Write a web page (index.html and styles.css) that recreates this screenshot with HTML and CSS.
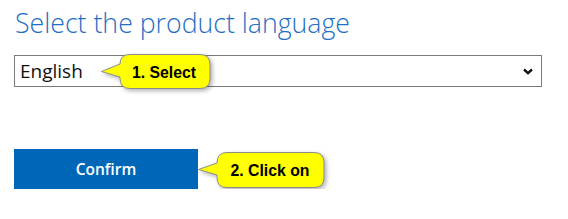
FILE: index.html
```html
<!DOCTYPE html>
<html lang="en">
<head>
<meta charset="utf-8">
<title>Select the product language</title>
<link rel="stylesheet" href="styles.css">
</head>
<body>
<main class="page">
  <h2 class="title">Select the product language</h2>
  <div class="field">
    <div class="select">
      <span class="select-value">English</span>
      <svg class="chevron" width="10" height="7" viewBox="0 0 10 7"><path d="M1 1.5 L5 5.2 L9 1.5" fill="none" stroke="#111" stroke-width="2.4"/></svg>
    </div>
    <div class="callout callout-1">
      <svg class="bubble" width="114" height="40" viewBox="0 0 114 40"><path d="M30 1.5 H100 Q110 1.5 110 11.5 V25.5 Q110 35.5 100 35.5 H30 Q20 35.5 20 25.5 V24 L1.5 18.5 L20 11 Q20 1.5 30 1.5 Z" fill="#ffff00" stroke="#8c8c8c" stroke-width="1"/></svg>
      <span class="callout-text">1. Select</span>
    </div>
  </div>
  <div class="actions">
    <button class="confirm" type="button">Confirm</button>
    <div class="callout callout-2">
      <svg class="bubble" width="130" height="40" viewBox="0 0 130 40"><path d="M29 1.5 H116 Q126 1.5 126 11.5 V26.5 Q126 36.5 116 36.5 H29 Q19 36.5 19 26.5 V24 L0.5 18.5 L19 12 Q19 1.5 29 1.5 Z" fill="#ffff00" stroke="#8c8c8c" stroke-width="1"/></svg>
      <span class="callout-text">2. Click on</span>
    </div>
  </div>
</main>
</body>
</html>
```
FILE: styles.css
```css
html, body {
  margin: 0;
  padding: 0;
  background: #ffffff;
}

.page {
  padding: 0 14px;
  font-family: "Open Sans", "Noto Sans", sans-serif;
}

.title {
  margin: 0;
  padding-top: 5px;
  padding-left: 1px;
  font-family: "Open Sans", sans-serif;
  font-weight: 300;
  font-size: 26.7px;
  line-height: 36px;
  color: #1f6fc5;
  letter-spacing: 0;
}

.field {
  position: relative;
  margin-top: 14px;
  width: 528px;
}

.select {
  box-sizing: border-box;
  height: 32px;
  border: 1px solid #7a7a7a;
  display: flex;
  align-items: center;
  justify-content: space-between;
  padding: 0 8px 0 5px;
}

.select-value {
  font-family: "Open Sans", sans-serif;
  font-size: 19px;
  color: #111;
  line-height: 30px;
}

.actions {
  position: relative;
  margin-top: 62px;
  width: 528px;
}

.confirm {
  display: block;
  width: 184px;
  height: 40px;
  border: 0;
  margin: 0;
  background: #0067b8;
  color: #fff;
  font-family: "Open Sans", sans-serif;
  font-weight: 600;
  font-size: 15.5px;
  padding: 0;
}

.callout {
  position: absolute;
  display: flex;
  align-items: center;
  justify-content: center;
}

.callout .bubble {
  position: absolute;
  left: 0;
  top: 0;
  filter: drop-shadow(2px 2px 2px rgba(0, 0, 0, 0.3));
}

.callout-text {
  position: relative;
  font-family: "Liberation Sans", Arial, sans-serif;
  font-weight: 700;
  font-size: 15.8px;
  color: #000;
}

.callout-1 {
  left: 86px;
  top: -2px;
  width: 114px;
  height: 40px;
  padding-left: 14px;
  box-sizing: border-box;
}

.callout-2 {
  left: 184px;
  top: 2px;
  width: 130px;
  height: 40px;
  padding-left: 14px;
  box-sizing: border-box;
}
```
